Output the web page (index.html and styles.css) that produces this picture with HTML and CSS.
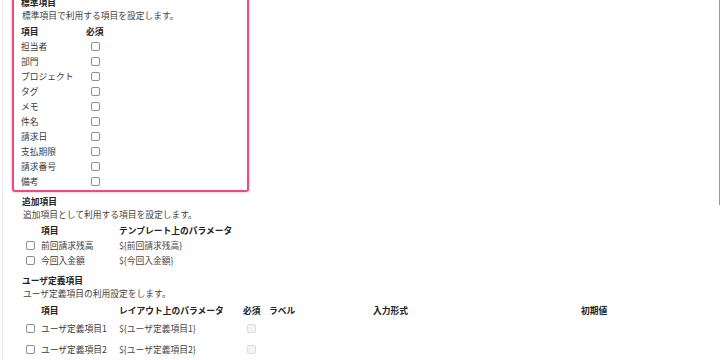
FILE: index.html
```
<!DOCTYPE html>
<html lang="ja">
<head>
<meta charset="utf-8">
<title>項目設定</title>
<link rel="stylesheet" href="styles.css">
</head>
<body>
<div class="page">
  <section class="card">
    <h3 class="title">標準項目</h3>
    <p class="desc">標準項目で利用する項目を設定します。</p>
    <div class="std-grid">
      <div class="th">項目</div><div class="th">必須</div>
      <div>担当者</div><div class="c"><input type="checkbox" class="cb"></div>
      <div>部門</div><div class="c"><input type="checkbox" class="cb"></div>
      <div>プロジェクト</div><div class="c"><input type="checkbox" class="cb"></div>
      <div>タグ</div><div class="c"><input type="checkbox" class="cb"></div>
      <div>メモ</div><div class="c"><input type="checkbox" class="cb"></div>
      <div>件名</div><div class="c"><input type="checkbox" class="cb"></div>
      <div>請求日</div><div class="c"><input type="checkbox" class="cb"></div>
      <div>支払期限</div><div class="c"><input type="checkbox" class="cb"></div>
      <div>請求番号</div><div class="c"><input type="checkbox" class="cb"></div>
      <div>備考</div><div class="c"><input type="checkbox" class="cb"></div>
    </div>
  </section>

  <section class="sec sec-add">
    <h3 class="title">追加項目</h3>
    <p class="desc">追加項目として利用する項目を設定します。</p>
    <div class="add-grid">
      <div></div><div class="th">項目</div><div class="th">テンプレート上のパラメータ</div>
      <div><input type="checkbox" class="cb"></div><div>前回請求残高</div><div class="param">${前回請求残高}</div>
      <div><input type="checkbox" class="cb"></div><div>今回入金額</div><div class="param">${今回入金額}</div>
    </div>
  </section>

  <section class="sec sec-user">
    <h3 class="title">ユーザ定義項目</h3>
    <p class="desc">ユーザ定義項目の利用設定をします。</p>
    <div class="user-grid">
      <div class="th"></div><div class="th">項目</div><div class="th">レイアウト上のパラメータ</div><div class="th">必須</div><div class="th">ラベル</div><div class="th">入力形式</div><div class="th">初期値</div>
      <div><input type="checkbox" class="cb"></div><div>ユーザ定義項目1</div><div class="param">${ユーザ定義項目1}</div><div><input type="checkbox" class="cb req" disabled></div><div></div><div></div><div></div>
      <div><input type="checkbox" class="cb"></div><div>ユーザ定義項目2</div><div class="param">${ユーザ定義項目2}</div><div><input type="checkbox" class="cb req" disabled></div><div></div><div></div><div></div>
    </div>
  </section>
</div>
<div class="scroll-thumb"></div>
</body>
</html>
```
FILE: styles.css
```
html, body {
  margin: 0;
  padding: 0;
  background: #ffffff;
  overflow: hidden;
}

body {
  font-family: "Noto Sans CJK JP", "Noto Sans", sans-serif;
  font-size: 8.75px;
  color: #3a3a3a;
  height: 360px;
}

.page {
  margin-left: 2px;
  border-left: 1px solid #ececec;
  min-height: 370px;
  padding-left: 9px;
}

.title {
  margin: 0;
  font-size: 8.75px;
  font-weight: 700;
  line-height: 13px;
  color: #222;
}

.desc {
  margin: 0 0 0 1px;
  line-height: 13px;
  color: #444;
}

.th {
  font-weight: 700;
  color: #222;
}

.card {
  margin-top: -11px;
  width: 216px;
  border: 2px solid #ee4a7f;
  border-radius: 3px;
  box-shadow: 0 0 3px rgba(238, 74, 127, 0.45);
  padding: 4.5px 10px 1.5px 7px;
}

.std-grid {
  margin-top: 2px;
  display: grid;
  grid-template-columns: 65px 18px;
  grid-auto-rows: 15px;
  align-items: center;
}

.c {
  display: flex;
  justify-content: center;
}

.cb {
  appearance: none;
  -webkit-appearance: none;
  margin: 0;
  width: 9px;
  height: 9px;
  border: 1px solid #8e8e8e;
  border-radius: 2px;
  background: #fff;
  display: block;
}

.cb.req {
  border-color: #dcdcdc;
  background: #f4f4f4;
  margin-left: 4px;
}

.sec {
  padding-left: 10px;
}

.sec-add {
  margin-top: 2.5px;
}

.sec-user {
  margin-top: 5.5px;
}

.add-grid {
  margin-top: 2.5px;
  margin-left: 4px;
  display: grid;
  grid-template-columns: 15px 78px auto;
  grid-auto-rows: 15px;
  align-items: center;
}

.param {
  color: #444;
}

.user-grid {
  margin-top: 3px;
  margin-left: 4px;
  display: grid;
  grid-template-columns: 15px 78px 124px 26px 104px 208px auto;
  grid-template-rows: 15px 21px 21px;
  align-items: center;
}

.scroll-thumb {
  position: fixed;
  top: 0;
  right: 0;
  width: 1px;
  height: 205px;
  background: #9a9a9a;
}
```
